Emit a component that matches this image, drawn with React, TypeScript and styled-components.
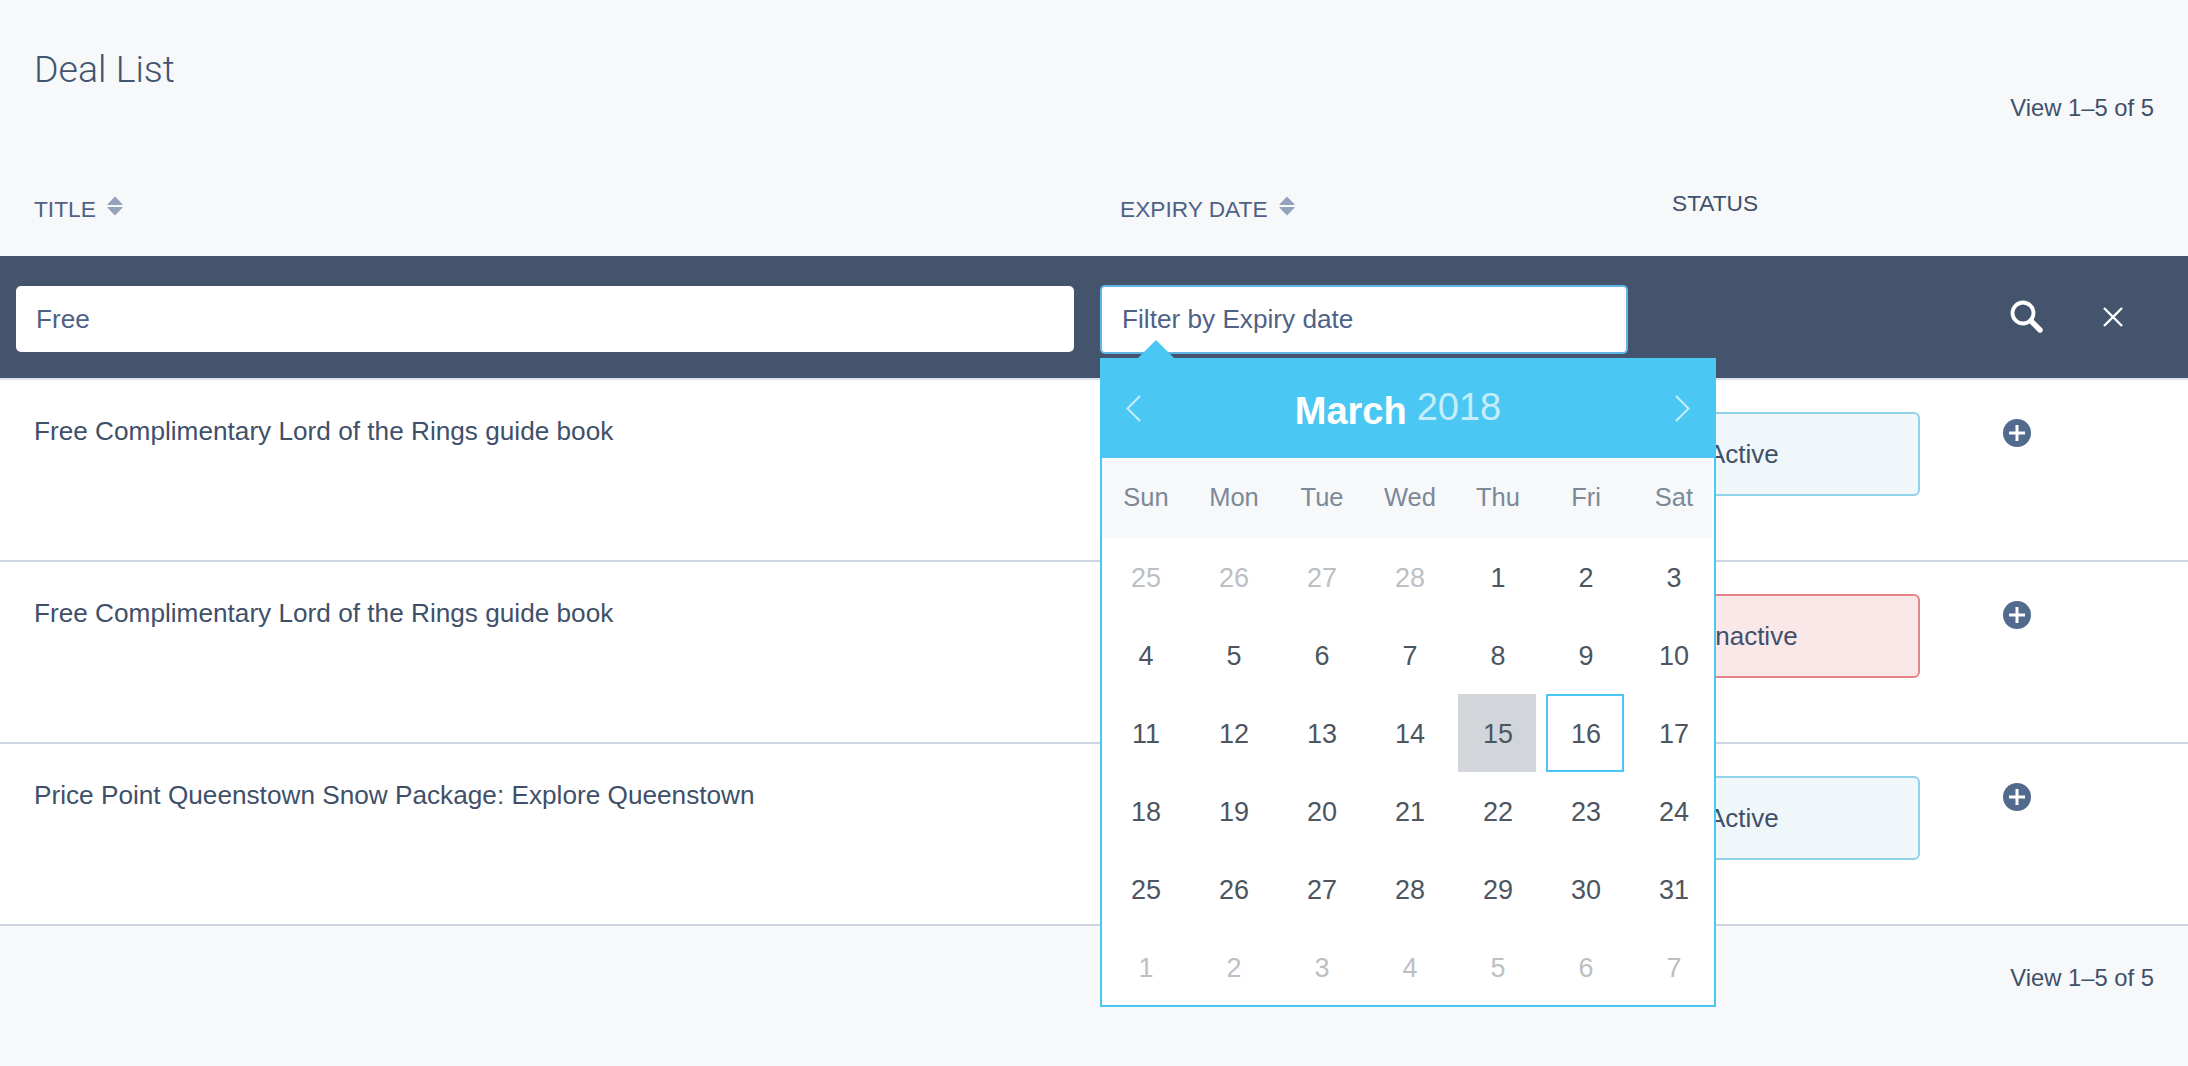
import { createGlobalStyle } from "styled-components";
import styled from "styled-components";

const GlobalStyle = createGlobalStyle`
	* {
		box-sizing: border-box;
	}
	html, body {
		margin: 0;
		padding: 0;
		background: #f7f8fa;
		font-family: "Liberation Sans", Arial, sans-serif;
		color: #3f5069;
	}
`;

const Page = styled.div`
	width: 2188px;
	height: 1066px;
	overflow: hidden;
	display: flex;
	flex-direction: column;
`;

const TopBar = styled.div`
	height: 160px;
	padding: 0 34px;
	display: flex;
	justify-content: space-between;
`;

const Title = styled.h1`
	margin: 48px 0 0;
	font-family: Roboto, "Liberation Sans", sans-serif;
	font-size: 37.5px;
	line-height: 42px;
	font-weight: 300;
	color: #43546e;
`;

const ViewCount = styled.div<{ $top: number }>`
	margin-top: ${props => props.$top}px;
	font-size: 23.8px;
	line-height: 28px;
	color: #3f5069;
`;

const HeadRow = styled.div`
	height: 96px;
	padding-left: 34px;
	display: grid;
	grid-template-columns: 1086px 552px 1fr;
`;

const HeadCell = styled.div<{ $plain?: boolean }>`
	display: flex;
	gap: 11px;
	align-items: flex-start;
	padding-top: ${props => (props.$plain ? 30 : 36)}px;
	font-size: 22.7px;
	line-height: 26px;
	color: ${props => (props.$plain ? "#3f5069" : "#4f6285")};
`;

const SortIcon = styled.svg`
	width: 16px;
	height: 20px;
	fill: #93a3bb;
`;

const FilterBar = styled.div`
	height: 124px;
	padding: 4px 65px 0 16px;
	background: #44546c;
	border-bottom: 2px solid #dde3ec;
	display: flex;
	align-items: center;
`;

const FilterInput = styled.input<{ $focused?: boolean }>`
	display: block;
	width: ${props => (props.$focused ? 528 : 1058)}px;
	height: ${props => (props.$focused ? 69 : 66)}px;
	padding: 0 20px;
	border: ${props => (props.$focused ? "2px solid #62b3e6" : "none")};
	border-radius: 5px;
	outline: none;
	background: #fff;
	font-family: inherit;
	font-size: 26.2px;
	color: #4f6285;
	&::placeholder {
		color: #4f6285;
		opacity: 1;
	}
`;

const DateFilter = styled.div`
	position: relative;
	margin: 1px 0 0 26px;
`;

const Popup = styled.div`
	position: absolute;
	z-index: 5;
	top: 73px;
	left: 0;
	width: 616px;
	height: 649px;
	background: #fff;
	border: 2px solid #4bc7f3;
	border-top: none;
	&::before {
		content: "";
		position: absolute;
		top: -18px;
		left: 36px;
		width: 36px;
		height: 18px;
		background: #4bc7f3;
		clip-path: polygon(50% 0, 100% 100%, 0 100%);
	}
`;

const CalHeader = styled.div`
	height: 100px;
	margin: 0 -2px;
	padding: 0 26px;
	background: #4bc7f3;
	display: flex;
	align-items: center;
	justify-content: space-between;
`;

const Chevron = styled.svg`
	width: 15px;
	height: 27px;
	fill: none;
	stroke: #c5edfb;
	stroke-width: 2;
`;

const MonthLabel = styled.div`
	display: flex;
	gap: 10px;
	align-items: baseline;
	margin: 6px 20px 0 0;
	font-size: 38px;
	line-height: 44px;
	color: #fff;
`;

const Month = styled.span`
	font-weight: 700;
`;

const Year = styled.span`
	position: relative;
	top: -4px;
	color: #c5edfb;
`;

const WeekRow = styled.div`
	height: 80px;
	background: #f7f8fa;
	padding: 0 0 2px 5px;
	display: grid;
	grid-template-columns: repeat(7, 78px);
	column-gap: 10px;
	align-items: center;
	margin-right: 2px;
`;

const WeekDay = styled.div`
	text-align: center;
	font-size: 25.5px;
	color: #7c8997;
`;

const DayGrid = styled.div`
	padding-left: 4px;
	display: grid;
	grid-template-columns: repeat(7, 78px);
	grid-auto-rows: 78px;
	column-gap: 10px;
`;

const Day = styled.div<{ $muted?: boolean; $selected?: boolean; $today?: boolean }>`
	display: flex;
	align-items: center;
	justify-content: center;
	padding: 3px 0 0 2px;
	font-size: 27px;
	color: ${props => (props.$muted ? "#bcc0c4" : "#4c5560")};
	background: ${props => (props.$selected ? "#d2d6da" : "transparent")};
	border: ${props => (props.$today ? "2px solid #4bc7f3" : "none")};
`;

const SearchButton = styled.svg`
	width: 33px;
	height: 33px;
	margin: -6px 0 0 auto;
	fill: none;
	stroke: #fff;
`;

const CloseButton = styled.svg`
	width: 20px;
	height: 20px;
	margin: -5px 0 0 60px;
	fill: none;
	stroke: #fff;
	stroke-width: 2.4;
`;

const Row = styled.div`
	height: 182px;
	background: #fff;
	border-bottom: 2px solid #cdd5e2;
	padding-left: 34px;
	display: grid;
	grid-template-columns: 1638px 331px 1fr;
	align-items: start;
`;

const RowTitle = styled.div`
	margin-top: 37px;
	font-size: 26.2px;
	line-height: 28px;
	color: #3f5069;
`;

const StatusPill = styled.div<{ $active: boolean }>`
	width: 248px;
	height: 84px;
	margin-top: 32px;
	padding-left: 34px;
	display: flex;
	align-items: center;
	border-radius: 6px;
	font-size: 26px;
	color: #3f5069;
	background: ${props => (props.$active ? "#eff7fb" : "#fae8e9")};
	border: 2px solid ${props => (props.$active ? "#92d1ea" : "#e5838a")};
`;

const PlusIcon = styled.svg`
	display: block;
	width: 28px;
	height: 28px;
	margin-top: 39px;
`;

const Footer = styled.div`
	flex: 1;
	padding: 38px 34px 0 0;
	display: flex;
	justify-content: flex-end;
`;

const deals = [
	{ title: "Free Complimentary Lord of the Rings guide book", active: true },
	{ title: "Free Complimentary Lord of the Rings guide book", active: false },
	{ title: "Price Point Queenstown Snow Package: Explore Queenstown", active: true },
];

const weekDays = ["Sun", "Mon", "Tue", "Wed", "Thu", "Fri", "Sat"];

const days = [
	...[25, 26, 27, 28].map(d => ({ d, muted: true })),
	...Array.from({ length: 31 }, (_, i) => ({ d: i + 1, muted: false })),
	...[1, 2, 3, 4, 5, 6, 7].map(d => ({ d, muted: true })),
];

function Sort() {
	return (
		<SortIcon viewBox="0 0 16 20">
			<path d="M8 0.5 15.5 8.2Q15.8 9 15 9H1Q0.2 9 0.5 8.2Z" />
			<path d="M8 19.5 15.5 11.8Q15.8 11 15 11H1Q0.2 11 0.5 11.8Z" />
		</SortIcon>
	);
}

function App() {
	return (
		<Page>
			<GlobalStyle />
			<TopBar>
				<Title>Deal List</Title>
				<ViewCount $top={94}>View 1–5 of 5</ViewCount>
			</TopBar>
			<HeadRow>
				<HeadCell>
					TITLE <Sort />
				</HeadCell>
				<HeadCell>
					EXPIRY DATE <Sort />
				</HeadCell>
				<HeadCell $plain>STATUS</HeadCell>
			</HeadRow>
			<FilterBar>
				<FilterInput defaultValue="Free" />
				<DateFilter>
					<FilterInput $focused placeholder="Filter by Expiry date" />
					<Popup>
						<CalHeader>
							<Chevron viewBox="0 0 15 27">
								<path d="M14 1 1.5 13.5 14 26" />
							</Chevron>
							<MonthLabel>
								<Month>March</Month>
								<Year>2018</Year>
							</MonthLabel>
							<Chevron viewBox="0 0 15 27">
								<path d="M1 1 13.5 13.5 1 26" />
							</Chevron>
						</CalHeader>
						<WeekRow>
							{weekDays.map(w => (
								<WeekDay key={w}>{w}</WeekDay>
							))}
						</WeekRow>
						<DayGrid>
							{days.map((item, i) => (
								<Day
									key={i}
									$muted={item.muted}
									$selected={!item.muted && item.d === 15}
									$today={!item.muted && item.d === 16}
								>
									{item.d}
								</Day>
							))}
						</DayGrid>
					</Popup>
				</DateFilter>
				<SearchButton viewBox="0 0 33 33">
					<circle cx="13" cy="13" r="10.5" strokeWidth="3.8" />
					<path d="M21 21 30 30" strokeWidth="5.4" strokeLinecap="round" />
				</SearchButton>
				<CloseButton viewBox="0 0 20 20">
					<path d="M1 1 19 19M19 1 1 19" />
				</CloseButton>
			</FilterBar>
			{deals.map((deal, i) => (
				<Row key={i}>
					<RowTitle>{deal.title}</RowTitle>
					<StatusPill $active={deal.active}>{deal.active ? "Active" : "Inactive"}</StatusPill>
					<PlusIcon viewBox="0 0 28 28">
						<circle cx="14" cy="14" r="14" fill="#526a8e" />
						<path d="M14 6V22M6 14H22" stroke="#fff" strokeWidth="3" />
					</PlusIcon>
				</Row>
			))}
			<Footer>
				<ViewCount $top={0}>View 1–5 of 5</ViewCount>
			</Footer>
		</Page>
	);
}

export default App;
